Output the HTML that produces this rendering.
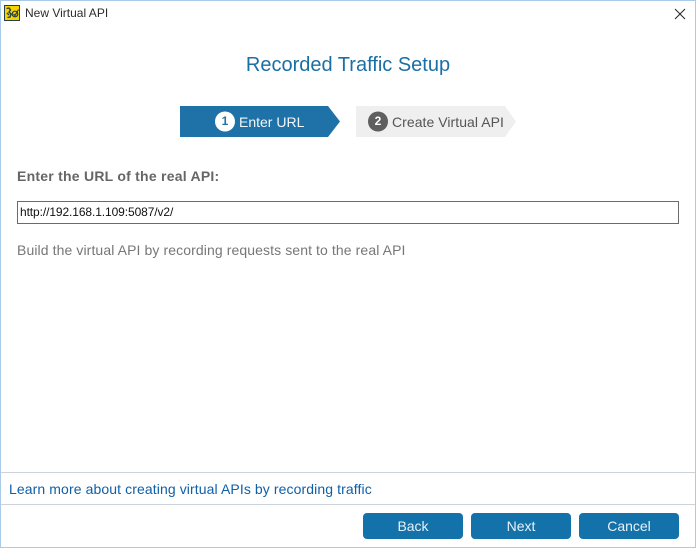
<!DOCTYPE html>
<html>
<head>
<meta charset="utf-8">
<style>
html,body{margin:0;padding:0;background:#fff;}
body{width:696px;height:548px;position:relative;overflow:hidden;font-family:"Liberation Sans",sans-serif;}
.a{position:absolute;white-space:nowrap;}
.btn{position:absolute;top:513px;width:100px;height:26px;background:#1472ab;border-radius:4px;color:#e8f1f7;font-size:14px;line-height:26px;text-align:center;}
</style>
</head>
<body>
<div class="a" style="left:0;top:0;width:696px;height:1px;background:#a9cbe8"></div>
<div class="a" style="left:0;top:0;width:1px;height:548px;background:#a9cbe8"></div>
<div class="a" style="left:695px;top:0;width:1px;height:548px;background:#a9cbe8"></div>
<div class="a" style="left:0;top:547px;width:696px;height:1px;background:#a9cbe8"></div>

<svg class="a" style="left:4px;top:5px" width="16" height="16" viewBox="0 0 16 16">
<rect x="0" y="0" width="16" height="16" fill="#f5d400"/>
<rect x=".5" y=".5" width="15" height="15" fill="none" stroke="#26404a" stroke-width="1"/>
<path d="M2.500 3.500 L5 3 L6.500 5 L5 7 L7 9 L6 12 L3.500 12.500 M3 8 L5 10" fill="none" stroke="#26404a" stroke-width="1.400"/>
<circle cx="11" cy="9" r="2.800" fill="none" stroke="#26404a" stroke-width="1.200"/>
<path d="M9.500 9 L11 10.500 L14.500 4.500" fill="none" stroke="#26404a" stroke-width="1.200"/>
</svg>
<div class="a" style="left:25px;top:6px;font-size:12px;line-height:14px;color:#2c2c2c">New Virtual API</div>
<svg class="a" style="left:674px;top:8px" width="12" height="12" viewBox="0 0 12 12"><path d="M1 1 L11 11 M11 1 L1 11" stroke="#222" stroke-width="1" fill="none"/></svg>

<div class="a" style="left:0;width:696px;top:53px;text-align:center;font-size:20px;line-height:24px;color:#1a6fa5">Recorded Traffic Setup</div>

<svg class="a" style="left:180px;top:106px" width="340" height="31" viewBox="0 0 340 31">
<path d="M0 0 H148 L160 15.500 L148 31 H0 Z" fill="#1f72a8"/>
<path d="M176 0 H325 L336 15.500 L325 31 H176 Z" fill="#efefef"/>
<circle cx="45" cy="15.500" r="10" fill="#fff"/>
<circle cx="198" cy="15.500" r="10" fill="#5f5f5f"/>
</svg>
<div class="a" style="left:215px;top:107px;width:20px;text-align:center;font-size:12px;line-height:29px;font-weight:bold;color:#1f72a8">1</div>
<div class="a" style="left:239px;top:106px;font-size:14px;line-height:32px;color:#f2f7fa">Enter URL</div>
<div class="a" style="left:368px;top:107px;width:20px;text-align:center;font-size:12px;line-height:29px;font-weight:bold;color:#fff">2</div>
<div class="a" style="left:392px;top:106px;font-size:14px;line-height:32px;color:#555;letter-spacing:.05px">Create Virtual API</div>

<div class="a" style="left:17px;top:167px;font-size:14px;line-height:18px;font-weight:bold;color:#666;letter-spacing:.24px">Enter the URL of the real API:</div>
<div class="a" style="left:17px;top:201px;width:660px;height:21px;border:1px solid #6b6b6b;background:#fff"></div>
<div class="a" style="left:20px;top:205px;font-size:12px;line-height:15px;color:#111;letter-spacing:-.1px">http://192.168.1.109:5087/v2/</div>
<div class="a" style="left:17px;top:241px;font-size:14px;line-height:18px;color:#777;letter-spacing:.1px">Build the virtual API by recording requests sent to the real API</div>

<div class="a" style="left:1px;top:472px;width:694px;height:1px;background:#cdd3d8"></div>
<div class="a" style="left:9px;top:480px;font-size:14px;line-height:18px;color:#0f5fa8;letter-spacing:.1px">Learn more about creating virtual APIs by recording traffic</div>
<div class="a" style="left:1px;top:504px;width:694px;height:1px;background:#cdd3d8"></div>

<div class="btn" style="left:363px">Back</div>
<div class="btn" style="left:471px">Next</div>
<div class="btn" style="left:579px">Cancel</div>
</body>
</html>
